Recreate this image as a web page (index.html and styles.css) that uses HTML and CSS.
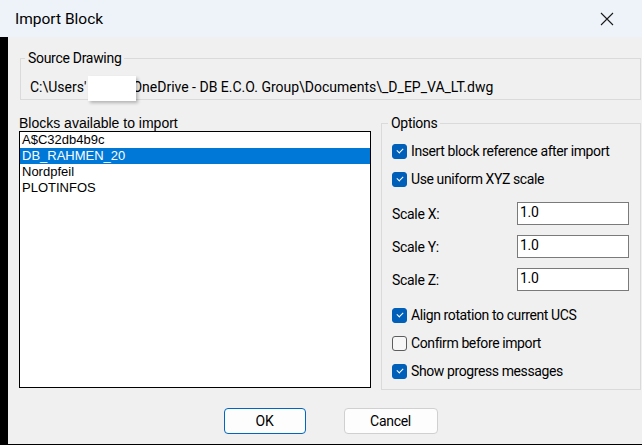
FILE: index.html
```html
<!DOCTYPE html>
<html>
<head>
    <meta charset="utf-8">
    <title>Import Block</title>
    <link rel="stylesheet" href="styles.css">
</head>
<body>
<div class="titlebar">
    <span class="title">Import Block</span>
    <svg class="close" width="14" height="14" viewBox="0 0 14 14">
        <path d="M1 1 L13 13 M13 1 L1 13" stroke="#1a1a1a" stroke-width="1.1" fill="none"/>
    </svg>
</div>
<div class="frame">
    <div class="edge"></div>
    <div class="dialog">
        <fieldset class="group source">
            <legend>Source Drawing</legend>
            <div class="path">C:\Users'<span class="blank"></span>OneDrive - DB E.C.O. Group\Documents\_D_EP_VA_LT.dwg</div>
        </fieldset>

        <div class="middle">
            <div class="blocks">
                <div class="list-label">Blocks available to import</div>
                <div class="listbox">
                    <div class="item">A$C32db4b9c</div>
                    <div class="item selected">DB_RAHMEN_20</div>
                    <div class="item">Nordpfeil</div>
                    <div class="item">PLOTINFOS</div>
                </div>
            </div>

            <fieldset class="group options">
                <legend>Options</legend>
                <div class="check-row"><span class="box checked"></span>Insert block reference after import</div>
                <div class="check-row"><span class="box checked"></span>Use uniform XYZ scale</div>
                <div class="scales">
                    <div class="scale-row"><span class="scale-label">Scale X:</span><span class="field">1.0</span></div>
                    <div class="scale-row"><span class="scale-label">Scale Y:</span><span class="field">1.0</span></div>
                    <div class="scale-row"><span class="scale-label">Scale Z:</span><span class="field">1.0</span></div>
                </div>
                <div class="check-row gap"><span class="box checked"></span>Align rotation to current UCS</div>
                <div class="check-row"><span class="box"></span>Confirm before import</div>
                <div class="check-row"><span class="box checked"></span>Show progress messages</div>
            </fieldset>
        </div>

        <div class="buttons">
            <button class="btn default">OK</button>
            <button class="btn cancel">Cancel</button>
        </div>
    </div>
</div>
</body>
</html>
```
FILE: styles.css
```css
html, body {
    margin: 0;
    padding: 0;
}
body {
    width: 642px;
    height: 445px;
    overflow: hidden;
    font-family: Roboto, "Liberation Sans", sans-serif;
    font-size: 14px;
    color: #000000;
    background: #f0f0f0;
}
.titlebar {
    height: 37px;
    background: #eef3f9;
    display: flex;
    align-items: center;
    justify-content: space-between;
    padding: 0 28px 0 15px;
}
.title {
    font-size: 15.5px;
}
.close {
    display: block;
}
.frame {
    display: flex;
    height: 408px;
}
.edge {
    width: 8px;
    background: #000000;
}
.dialog {
    flex: 1;
    background: #f0f0f0;
    border-bottom: 1px solid #000000;
    padding: 13px 1px 0 12px;
}

/* group boxes */
.group {
    margin: 0;
    border: 1px solid #dadada;
    min-width: 0;
}
.group legend {
    line-height: 16px;
    padding: 0 3px;
    margin-left: -5px;
    letter-spacing: -0.3px;
}
.source {
    padding: 13px 9px 4px 9px;
}
.path {
    line-height: 16px;
    white-space: nowrap;
}
.blank {
    display: inline-block;
    position: relative;
    z-index: 1;
    width: 48px;
    height: 25px;
    margin: -6px -4px -6px 2px;
    vertical-align: middle;
    background: #ffffff;
    box-shadow: 2px 2px 3px rgba(0, 0, 0, 0.25);
}

/* middle */
.middle {
    display: grid;
    grid-template-columns: 352px 260px;
    column-gap: 10px;
    margin-top: 15px;
    margin-left: -1px;
}
.list-label {
    font-family: "Liberation Sans", Arial, sans-serif;
    font-size: 14px;
    line-height: 15px;
    padding-top: 1px;
}
.listbox {
    height: 255px;
    background: #ffffff;
    border: 1px solid #000000;
    font-family: "Liberation Sans", Arial, sans-serif;
    font-size: 13px;
}
.item {
    height: 16px;
    line-height: 16px;
    padding-left: 2px;
}
.item.selected {
    background: #0078d7;
    color: #ffffff;
}

.options {
    padding: 6px 10px 4px 10px;
}
.options legend {
    margin-left: -4px;
}
.check-row {
    height: 28px;
    display: flex;
    align-items: center;
    letter-spacing: -0.4px;
}
.check-row.gap {
    margin-top: 5px;
}
.box {
    width: 13px;
    height: 13px;
    border: 1px solid #5d5d5d;
    border-radius: 3px;
    background: #f7f7f7;
    margin-right: 4px;
    flex: none;
    position: relative;
}
.box.checked {
    background: #005fb8;
    border-color: #005fb8;
}
.box.checked::after {
    content: "";
    position: absolute;
    left: 4px;
    top: 3px;
    width: 5px;
    height: 3px;
    border-left: 1px solid #ffffff;
    border-bottom: 1px solid #ffffff;
    transform: rotate(-45deg);
}
.scales {
    margin-top: 4px;
}
.scale-row {
    height: 33px;
    display: flex;
    align-items: center;
    letter-spacing: -0.3px;
}
.scale-label {
    width: 125px;
}
.field {
    box-sizing: border-box;
    width: 112px;
    height: 23px;
    border: 1px solid #7a7a7a;
    background: #ffffff;
    padding: 0 2px;
    line-height: 19px;
}

/* buttons */
.buttons {
    display: flex;
    justify-content: center;
    gap: 38px;
    margin-top: 18px;
}
.btn {
    height: 26px;
    font-family: Roboto, "Liberation Sans", sans-serif;
    font-size: 14px;
    color: #000000;
    background: #fdfdfd;
    border: 1px solid #d0d0d0;
    border-radius: 4px;
    padding: 0;
    letter-spacing: -0.3px;
}
.btn.default {
    width: 82px;
    border-color: #0067c0;
}
.btn.cancel {
    width: 94px;
}
```
